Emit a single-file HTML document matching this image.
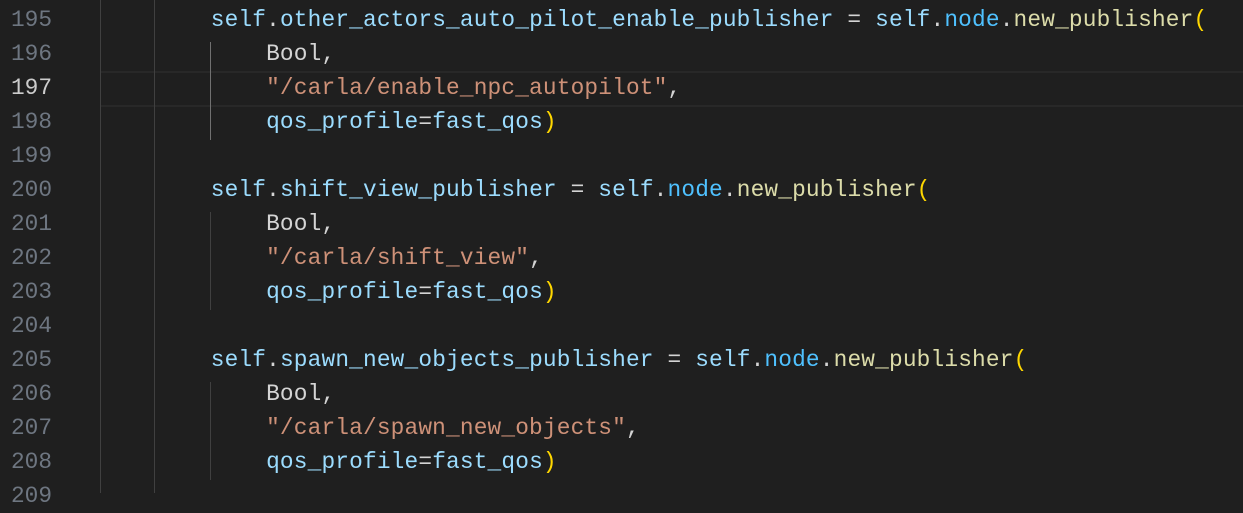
<!DOCTYPE html>
<html><head><style>
html,body{margin:0;height:493px;}
body{background:#1f1f1f;width:1243px;overflow:hidden;position:relative;font-family:"Liberation Mono",monospace;font-size:22.8px;letter-spacing:0.16px;}
.ln{position:absolute;left:0;width:52px;text-align:right;color:#6e7681;height:34px;line-height:34px;letter-spacing:0}
.cur{color:#cccccc}
.code{position:absolute;left:100px;height:34px;line-height:34px;white-space:pre;color:#d4d4d4;}
.g{position:absolute;width:1px;background:#404040;}
.v{color:#9cdcfe}.n{color:#4fc1ff}.s{color:#ce9178}.p{color:#ffd700}.f{color:#dcdcaa}
.hl{position:absolute;left:100px;right:0;top:71px;height:32px;border-top:2px solid #282828;border-bottom:2px solid #282828;}
</style></head><body>
<div class="hl"></div>
<div class="g" style="left:100px;top:0;height:493px"></div>
<div class="g" style="left:154px;top:0;height:493px"></div>
<div class="g" style="left:210px;top:42px;height:98px;background:#707070"></div>
<div class="g" style="left:210px;top:212px;height:98px"></div>
<div class="g" style="left:210px;top:382px;height:98px"></div>

<div class="ln" style="top:3px">195</div>
<div class="ln" style="top:37px">196</div>
<div class="ln cur" style="top:71px">197</div>
<div class="ln" style="top:105px">198</div>
<div class="ln" style="top:139px">199</div>
<div class="ln" style="top:173px">200</div>
<div class="ln" style="top:207px">201</div>
<div class="ln" style="top:241px">202</div>
<div class="ln" style="top:275px">203</div>
<div class="ln" style="top:309px">204</div>
<div class="ln" style="top:343px">205</div>
<div class="ln" style="top:377px">206</div>
<div class="ln" style="top:411px">207</div>
<div class="ln" style="top:445px">208</div>
<div class="ln" style="top:479px">209</div>

<div class="code" style="top:3px">        <span class="v">self</span>.<span class="v">other_actors_auto_pilot_enable_publisher</span> = <span class="v">self</span>.<span class="n">node</span>.<span class="f">new_publisher</span><span class="p">(</span></div>
<div class="code" style="top:37px">            Bool,</div>
<div class="code" style="top:71px">            <span class="s">"/carla/enable_npc_autopilot"</span>,</div>
<div class="code" style="top:105px">            <span class="v">qos_profile</span>=<span class="v">fast_qos</span><span class="p">)</span></div>
<div class="code" style="top:173px">        <span class="v">self</span>.<span class="v">shift_view_publisher</span> = <span class="v">self</span>.<span class="n">node</span>.<span class="f">new_publisher</span><span class="p">(</span></div>
<div class="code" style="top:207px">            Bool,</div>
<div class="code" style="top:241px">            <span class="s">"/carla/shift_view"</span>,</div>
<div class="code" style="top:275px">            <span class="v">qos_profile</span>=<span class="v">fast_qos</span><span class="p">)</span></div>
<div class="code" style="top:343px">        <span class="v">self</span>.<span class="v">spawn_new_objects_publisher</span> = <span class="v">self</span>.<span class="n">node</span>.<span class="f">new_publisher</span><span class="p">(</span></div>
<div class="code" style="top:377px">            Bool,</div>
<div class="code" style="top:411px">            <span class="s">"/carla/spawn_new_objects"</span>,</div>
<div class="code" style="top:445px">            <span class="v">qos_profile</span>=<span class="v">fast_qos</span><span class="p">)</span></div>
</body></html>
